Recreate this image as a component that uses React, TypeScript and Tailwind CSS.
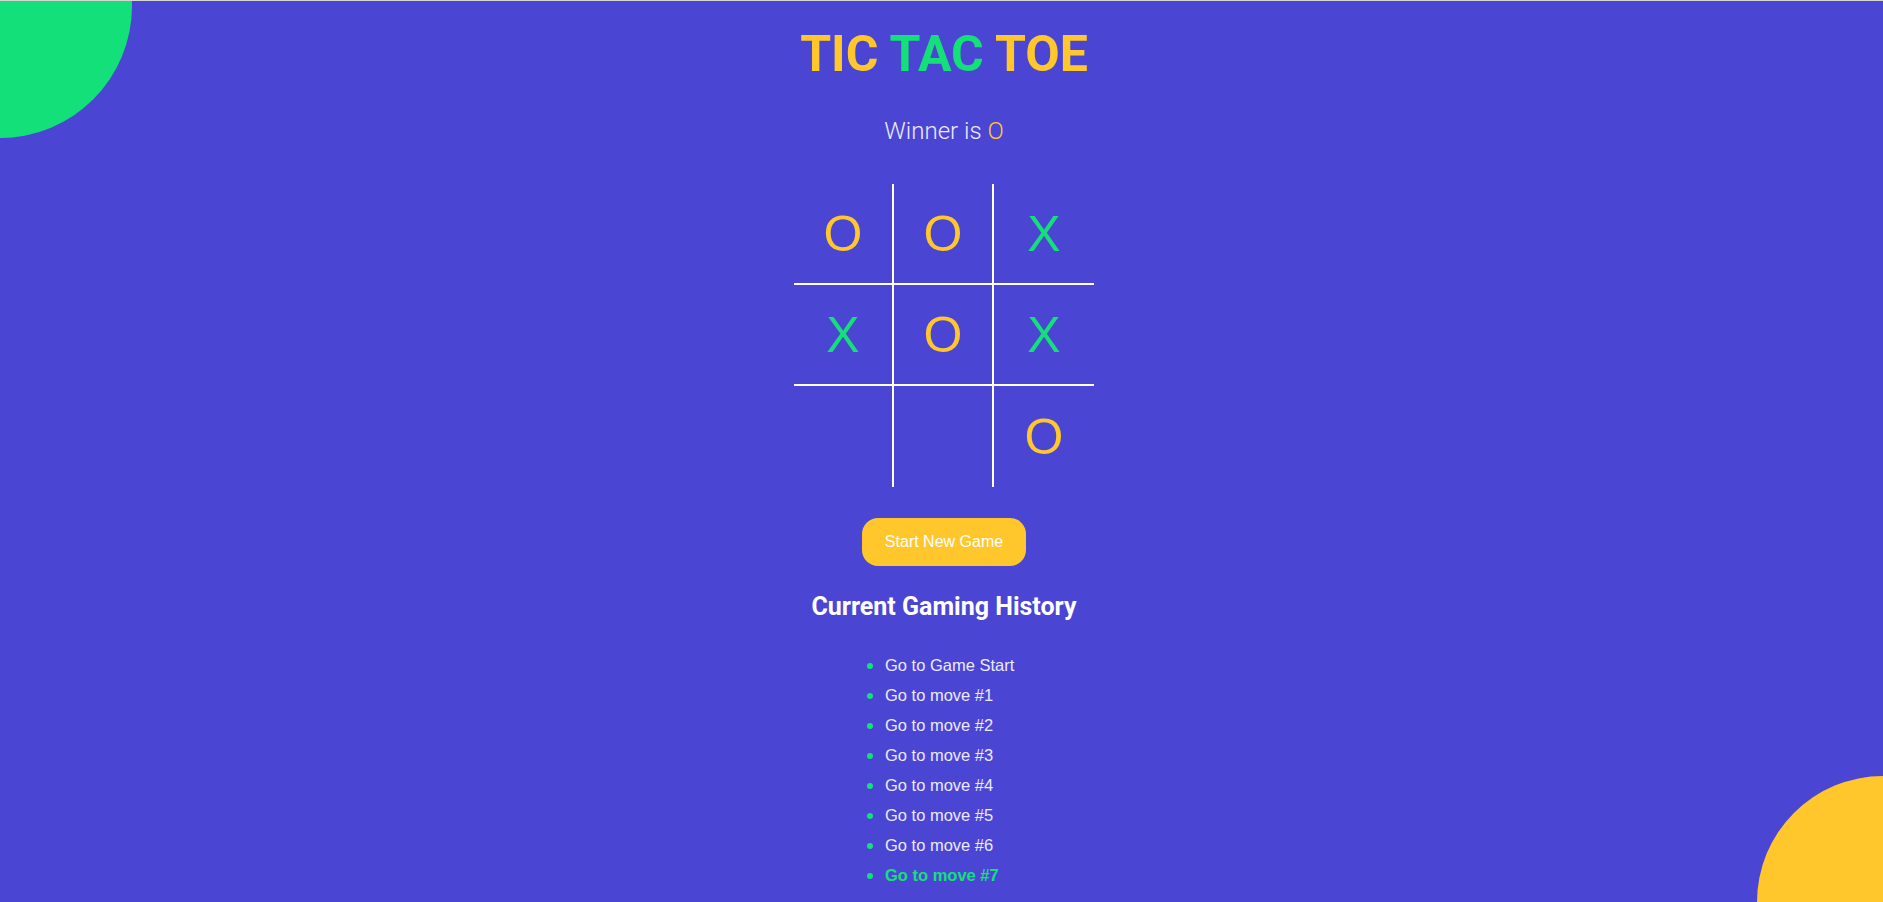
import React from 'react';

type Mark = 'X' | 'O' | null;

const board: Mark[] = ['O', 'O', 'X', 'X', 'O', 'X', null, null, 'O'];

const moves = [
  'Go to Game Start',
  'Go to move #1',
  'Go to move #2',
  'Go to move #3',
  'Go to move #4',
  'Go to move #5',
  'Go to move #6',
  'Go to move #7',
];

function Square({ value, index }: { value: Mark; index: number }) {
  const col = index % 3;
  const row = Math.floor(index / 3);
  const borders = [
    col < 2 ? 'border-r-2' : '',
    row < 2 ? 'border-b-2' : '',
  ].join(' ');
  return (
    <button
      className={`flex h-[101px] w-[100px] items-center justify-center border-white bg-transparent font-['Liberation_Sans',Arial,sans-serif] text-[50px] leading-none ${borders} ${
        value === 'X' ? 'text-[#14e07a]' : 'text-[#ffc72c]'
      }`}
    >
      {value}
    </button>
  );
}

function Board() {
  return (
    <div className="mt-[41px]">
      <div className="grid grid-cols-3 w-[300px]">
        {board.map((v, i) => (
          <Square key={i} value={v} index={i} />
        ))}
      </div>
    </div>
  );
}

export default function App() {
  return (
    <div className="relative min-h-[902px] overflow-hidden border-t border-[#d6d6d6] bg-[#4b45d4]">
      {/* decorative blobs */}
      <div className="absolute -left-[132px] -top-[127px] h-[264px] w-[264px] rounded-full bg-[#14e07a]" />
      <div className="absolute -right-[126px] -bottom-[126px] h-[252px] w-[252px] rounded-full bg-[#ffc72c]" />

      <div className="relative flex flex-col items-center pl-[5px]">
        <h1 className="mt-[28px] font-['Roboto',sans-serif] text-[50px] font-bold leading-none">
          <span className="text-[#ffc72c]">TIC </span>
          <span className="text-[#14e07a]">TAC </span>
          <span className="text-[#ffc72c]">TOE</span>
        </h1>

        <p className="mt-[40px] font-['Roboto',sans-serif] text-[24px] font-light leading-none text-[#ecebff]">
          Winner is <span className="text-[#ffc72c]">O</span>
        </p>

        <Board />

        <button className="mt-[31px] h-[48px] w-[164px] rounded-[16px] bg-[#ffc72c] font-['Liberation_Sans',Arial,sans-serif] text-[16px] text-white">
          Start New Game
        </button>

        <h2 className="mt-[28px] font-['Roboto',sans-serif] text-[25px] font-bold leading-none text-white">
          Current Gaming History
        </h2>

        <div className="mt-[31px] w-[300px]">
          <ul className="list-disc pl-[91px] marker:text-[#14e07a]">
            {moves.map((m, i) => (
              <li key={m} className="h-[30px] leading-[30px]">
                <button
                  className={`font-['Liberation_Sans',Arial,sans-serif] text-[16.5px] ${
                    i === moves.length - 1 ? 'font-bold text-[#14e07a]' : 'text-[#ecebff]'
                  }`}
                >
                  {m}
                </button>
              </li>
            ))}
          </ul>
        </div>
      </div>
    </div>
  );
}
